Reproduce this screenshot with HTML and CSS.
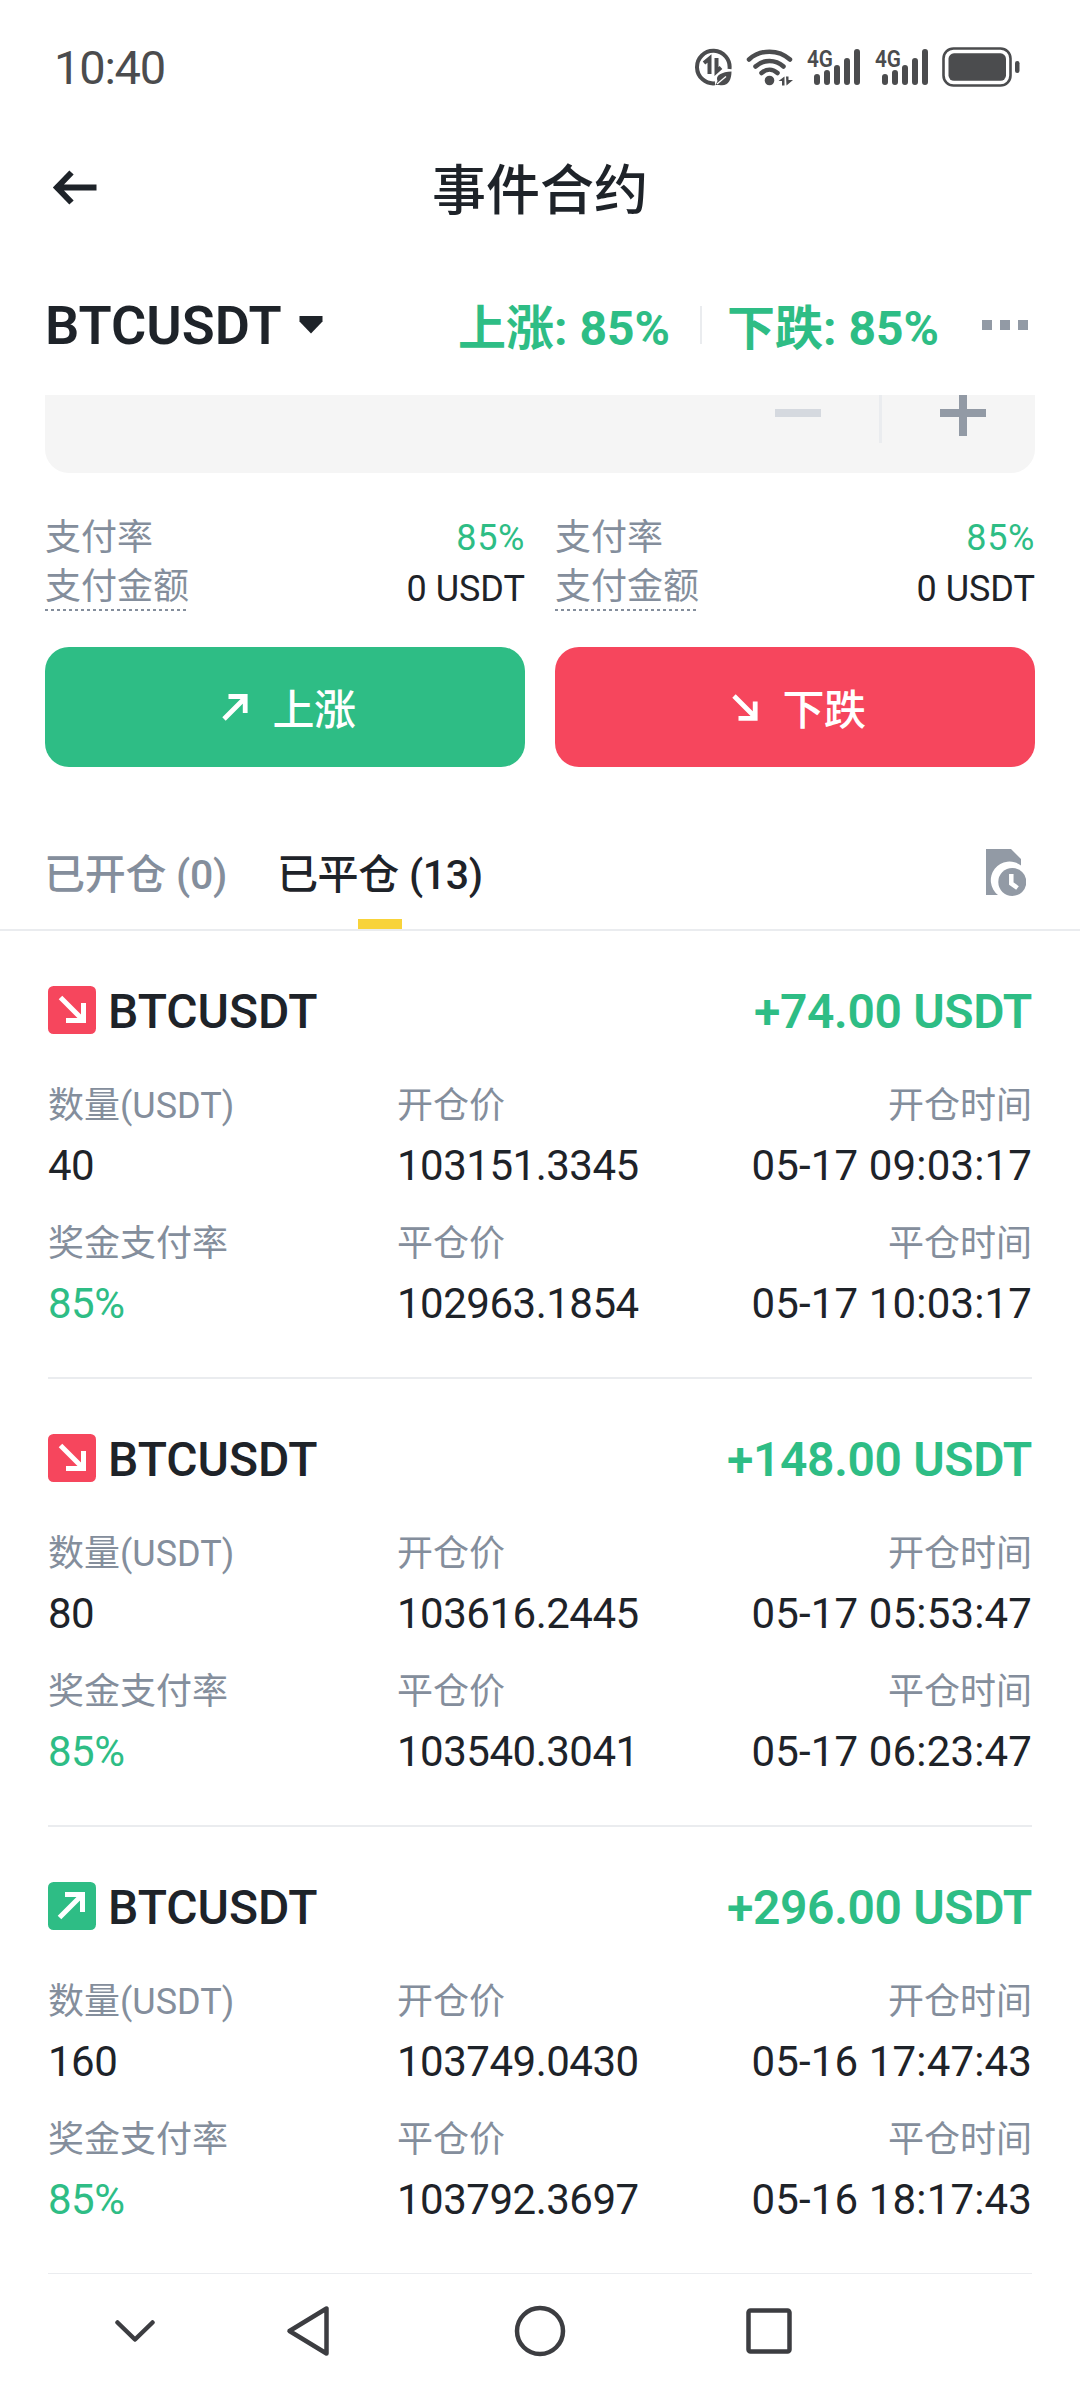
FILE: index.html
```html
<!DOCTYPE html>
<html lang="zh-CN">
<head>
<meta charset="utf-8">
<title>事件合约</title>
<link rel="stylesheet" href="styles.css">
</head>
<body>
<svg class="defs" width="0" height="0">
  <symbol id="badge-down" viewBox="0 0 48 48">
    <rect width="48" height="48" rx="5.500" fill="#f6465d"/>
    <path d="M12.500 11.500 33 32M18 34.500H35.500V17" fill="none" stroke="#fff" stroke-width="5"/>
  </symbol>
  <symbol id="badge-up" viewBox="0 0 48 48">
    <rect width="48" height="48" rx="5.500" fill="#2ebd85"/>
    <path d="M11.500 35.500 32 15M17 12.500H34.500V30" fill="none" stroke="#fff" stroke-width="5"/>
  </symbol>
</svg>
<div class="screen">
  <header class="status">
    <span class="clock">10:40</span>
    <svg class="s1" width="37" height="40" viewBox="0 0 37 40">
      <path d="M34.500 22A16.300 16.300 0 1 0 20 36.300" fill="none" stroke="#4b4c4e" stroke-width="4"/>
      <path d="M9 16 14.500 11.500V27M21.500 11V24.500L26 20.500" fill="none" stroke="#4b4c4e" stroke-width="4"/>
      <path d="M36.500 24.500C27 25 20 28 22.500 34L20.500 38H24C33 40 36.500 33 36.500 24.500Z" fill="#4b4c4e"/>
      <path d="M22 37 31 29.500" stroke="#fff" stroke-width="1.300"/>
    </svg>
    <svg class="s2" width="47" height="40" viewBox="0 0 47 40">
      <g fill="none" stroke="#4b4c4e" stroke-width="4.500" stroke-linecap="round"><path d="M3 12.500C14.500 2 32.500 2 44 12.500M9.500 19.500C17.500 12 29.500 12 37.500 19.500M15.500 26C20.500 21.500 26.500 21.500 31.500 26"/></g>
      <circle cx="23.500" cy="33.500" r="4.800" fill="#4b4c4e"/>
      <path d="M32.500 34 38.500 29.500V38.500H36V34ZM40 29.500H42.500V33H47L40.500 38.500Z" fill="#4b4c4e"/>
    </svg>
    <svg class="s3 cell-signal" width="55" height="40" viewBox="0 0 55 40">
      <text x="1" y="20" class="net" textLength="26" lengthAdjust="spacingAndGlyphs">4G</text>
      <path d="M11 30v5M21 26v9M31 21v14M41 14v21M51 5v30" stroke="#4b4c4e" stroke-width="6" stroke-linecap="round"/>
    </svg>
    <svg class="s3 cell-signal" width="55" height="40" viewBox="0 0 55 40">
      <text x="1" y="20" class="net" textLength="26" lengthAdjust="spacingAndGlyphs">4G</text>
      <path d="M11 30v5M21 26v9M31 21v14M41 14v21M51 5v30" stroke="#4b4c4e" stroke-width="6" stroke-linecap="round"/>
    </svg>
    <svg class="s3" width="78" height="40" viewBox="0 0 78 40">
      <rect x="1.500" y="1.500" width="67" height="37" rx="10" fill="none" stroke="#4b4c4e" stroke-width="2.600"/>
      <rect x="6.500" y="6.300" width="57.500" height="27.500" rx="5.500" fill="#4b4c4e"/>
      <rect x="73" y="14" width="4.500" height="12" rx="2.200" fill="#4b4c4e"/>
    </svg>
  </header>

  <div class="titlebar">
    <svg class="back" width="47" height="40" viewBox="0 0 47 40"><path d="M20.500 4.500 6 19.500 20.500 34.500M6 19.500H45.500" fill="none" stroke="#1e2329" stroke-width="6"/></svg>
    <h1>事件合约</h1>
  </div>

  <div class="pairbar">
    <span class="pair">BTCUSDT</span>
    <svg class="caret" width="24" height="18" viewBox="0 0 24 18"><path d="M0.500 0H23.500V5.500L12 17.500.500 5.500Z" fill="#1e2329"/></svg>
    <span class="rate">上涨: 85%</span>
    <i class="vline"></i>
    <span class="rate">下跌: 85%</span>
    <svg class="dots" width="46" height="10" viewBox="0 0 46 10"><path d="M0 0H10V10H0ZM18 0H28V10H18ZM36 0H46V10H36Z" fill="#929aa5"/></svg>
  </div>

  <div class="stepper">
    <svg width="46" height="8" viewBox="0 0 46 8" class="minus"><path d="M0 0H46V8H0Z" fill="#d5d9df"/></svg>
    <i class="sep"></i>
    <svg width="46" height="41" viewBox="0 0 46 41" class="plus"><path d="M19 0H27V14H46V22H27V41H19V22H0V14H19Z" fill="#929aa5"/></svg>
  </div>

  <div class="sides">
    <section class="side">
      <div class="line"><span class="label">支付率</span><span class="green pct">85%</span></div>
      <div class="line"><span class="label dotted">支付金额</span><span>0 USDT</span></div>
      <button class="btn up">
        <svg width="26" height="27" viewBox="0 0 26 27"><path d="M2 25 22 5M6.500 2.500H23.200V19" fill="none" stroke="#fff" stroke-width="4.800"/></svg>
        <span>上涨</span>
      </button>
    </section>
    <section class="side">
      <div class="line"><span class="label">支付率</span><span class="green pct">85%</span></div>
      <div class="line"><span class="label dotted">支付金额</span><span>0 USDT</span></div>
      <button class="btn down">
        <svg width="26" height="27" viewBox="0 0 26 27"><path d="M2 2 22 22M6.500 24.400H23.200V7.500" fill="none" stroke="#fff" stroke-width="4.800"/></svg>
        <span>下跌</span>
      </button>
    </section>
  </div>

  <nav class="tabs">
    <span class="tab">已开仓 (0)</span>
    <span class="tab active">已平仓 (13)</span>
    <svg class="history" width="40" height="48" viewBox="0 0 40 48">
      <path d="M0 0H25L35 10V16.500A18.500 18.500 0 0 0 12 46H0Z" fill="#929aa5"/>
      <circle cx="26.300" cy="33" r="14" fill="#929aa5"/>
      <path d="M25.300 25V34.500L31.500 39" fill="none" stroke="#fff" stroke-width="4.500"/>
    </svg>
  </nav>

  <main class="orders">
    <article class="order">
      <div class="head"><svg width="48" height="48"><use href="#badge-down"/></svg><b class="sym">BTCUSDT</b><b class="pnl">+74.00 USDT</b></div>
      <div class="grid">
        <div class="cell"><span class="label">数量(USDT)</span><span class="val">40</span></div>
        <div class="cell"><span class="label">开仓价</span><span class="val">103151.3345</span></div>
        <div class="cell end"><span class="label">开仓时间</span><span class="val time">05-17 09:03:17</span></div>
        <div class="cell"><span class="label">奖金支付率</span><span class="val green">85%</span></div>
        <div class="cell"><span class="label">平仓价</span><span class="val">102963.1854</span></div>
        <div class="cell end"><span class="label">平仓时间</span><span class="val time">05-17 10:03:17</span></div>
      </div>
    </article>
    <article class="order">
      <div class="head"><svg width="48" height="48"><use href="#badge-down"/></svg><b class="sym">BTCUSDT</b><b class="pnl">+148.00 USDT</b></div>
      <div class="grid">
        <div class="cell"><span class="label">数量(USDT)</span><span class="val">80</span></div>
        <div class="cell"><span class="label">开仓价</span><span class="val">103616.2445</span></div>
        <div class="cell end"><span class="label">开仓时间</span><span class="val time">05-17 05:53:47</span></div>
        <div class="cell"><span class="label">奖金支付率</span><span class="val green">85%</span></div>
        <div class="cell"><span class="label">平仓价</span><span class="val">103540.3041</span></div>
        <div class="cell end"><span class="label">平仓时间</span><span class="val time">05-17 06:23:47</span></div>
      </div>
    </article>
    <article class="order">
      <div class="head"><svg width="48" height="48"><use href="#badge-up"/></svg><b class="sym">BTCUSDT</b><b class="pnl">+296.00 USDT</b></div>
      <div class="grid">
        <div class="cell"><span class="label">数量(USDT)</span><span class="val">160</span></div>
        <div class="cell"><span class="label">开仓价</span><span class="val">103749.0430</span></div>
        <div class="cell end"><span class="label">开仓时间</span><span class="val time">05-16 17:47:43</span></div>
        <div class="cell"><span class="label">奖金支付率</span><span class="val green">85%</span></div>
        <div class="cell"><span class="label">平仓价</span><span class="val">103792.3697</span></div>
        <div class="cell end"><span class="label">平仓时间</span><span class="val time">05-16 18:17:43</span></div>
      </div>
    </article>
  </main>

  <footer class="sysnav">
    <svg width="40" height="52" viewBox="0 0 40 52"><path d="M2.500 17.500 20 34.500 37.500 17.500" fill="none" stroke="#3c3d41" stroke-width="4.500" stroke-linecap="round" stroke-linejoin="round"/></svg>
    <svg width="44" height="52" viewBox="0 0 44 52"><path d="M40.500 3.500V48.500L3.500 26Z" fill="none" stroke="#3c3d41" stroke-width="4.500" stroke-linejoin="round"/></svg>
    <svg width="52" height="52" viewBox="0 0 52 52"><circle cx="26" cy="26" r="23" fill="none" stroke="#3c3d41" stroke-width="4.500"/></svg>
    <svg width="46" height="52" viewBox="0 0 46 52"><rect x="2.500" y="5.500" width="41" height="41" rx="2" fill="none" stroke="#3c3d41" stroke-width="4.500"/></svg>
  </footer>
</div>
</body>
</html>
```
FILE: styles.css
```css
* { box-sizing: border-box; }
body {
  margin: 0;
  background: #fff;
  color: #1e2329;
  font-family: Roboto, "Noto Sans CJK SC", sans-serif;
}
svg { display: block; flex: none; }
.defs { position: absolute; }
.screen {
  width: 1080px;
  height: 2388px;
  overflow: hidden;
  display: flex;
  flex-direction: column;
}

.status {
  flex: none;
  height: 134px;
  padding: 0 60px 0 54px;
  display: flex;
  align-items: center;
}
.clock {
  margin-right: auto;
  padding-top: 2px;
  font-size: 47px;
  line-height: 60px;
  letter-spacing: -1.2px;
  color: #4b4c4e;
}
.s2 { margin-left: 14px; }
.s3 { margin-left: 13px; }
.cell-signal { overflow: visible; }
.net { font: 600 24px Roboto, sans-serif; fill: #4b4c4e; }

.titlebar {
  flex: none;
  height: 114px;
  padding: 0 51px;
  display: grid;
  grid-template-columns: 47px 1fr 47px;
  align-items: center;
}
.back { margin-bottom: 7px; }
h1 {
  margin: 0;
  padding-top: 2px;
  font-size: 54px;
  line-height: 70px;
  font-weight: 500;
  text-align: center;
}

.pairbar {
  flex: none;
  height: 147px;
  padding: 7px 52px 0 45px;
  display: flex;
  align-items: center;
}
.pair { padding-top: 2px; font-size: 54px; font-weight: 600; line-height: 70px; }
.caret { margin-left: 17px; margin-right: auto; }
.rate { font-size: 48px; font-weight: 700; line-height: 60px; color: #2ebd85; padding-top: 7px; }
.vline { width: 2px; height: 38px; margin: 0 25px 0 30px; background: #eaecef; }
.dots { margin-left: 43px; }

.stepper {
  flex: none;
  height: 78px;
  margin: 0 45px;
  padding-right: 49px;
  border-radius: 0 0 24px 24px;
  background: #f5f5f5;
  display: flex;
  justify-content: flex-end;
  align-items: flex-start;
}
.minus { margin-top: 14px; }
.sep { width: 3px; height: 48px; margin: 0 58px; background: #eaecef; }

.sides {
  flex: none;
  margin: 40px 45px 0;
  display: grid;
  grid-template-columns: 1fr 1fr;
  gap: 30px;
}
.line {
  display: flex;
  justify-content: space-between;
  align-items: flex-start;
  font-size: 36px;
  line-height: 51px;
}
.label { font-size: 36px; color: #848e9c; white-space: nowrap; }
.dotted {
  height: 47px;
  padding-top: 1px;
  line-height: 45px;
  background: repeating-linear-gradient(90deg, #848e9c 0 3px, transparent 3px 6px) 0 100% / 100% 2px no-repeat;
}
.green { color: #2ebd85; }
.pct { letter-spacing: 0.6px; }
.btn {
  width: 100%;
  height: 120px;
  margin-top: 32px;
  padding: 0 0 0 8px;
  border: 0;
  border-radius: 24px;
  display: flex;
  align-items: center;
  justify-content: center;
  gap: 24px;
  color: #fff;
  font: 500 42px/60px Roboto, "Noto Sans CJK SC", sans-serif;
}
.btn span { padding-top: 7px; letter-spacing: -0.5px; }
.up { background: #2ebd85; }
.down { background: #f6465d; }

.tabs {
  flex: none;
  height: 164px;
  padding: 0 54px 0 44px;
  border-bottom: 2px solid #eaecef;
  display: flex;
  align-items: flex-end;
  gap: 50px;
}
.tab {
  position: relative;
  height: 78px;
  font-size: 41px;
  line-height: 49px;
  font-weight: 500;
  letter-spacing: -0.3px;
  color: #848e9c;
}
.active { color: #1e2329; }
.active::after {
  content: "";
  position: absolute;
  left: 50%;
  bottom: 0;
  width: 44px;
  height: 10px;
  margin-left: -22px;
  background: #f8d33a;
}
.history { margin-left: auto; margin-bottom: 32px; }

.orders { flex: none; height: 1343px; overflow: hidden; padding: 0 48px; }
.order {
  height: 448px;
  padding-top: 55px;
  border-bottom: 2px solid #eaecef;
}
.head { display: flex; align-items: center; height: 48px; font-size: 48px; line-height: 48px; }
.sym { margin-left: 12px; padding-top: 3px; font-weight: 500; }
.pnl { margin-left: auto; padding-top: 3px; font-weight: 600; letter-spacing: -0.35px; color: #2ebd85; }
.grid {
  margin-top: 51px;
  display: grid;
  grid-template-columns: 349px 1fr auto;
  row-gap: 32px;
}
.cell { display: flex; flex-direction: column; gap: 14px; }
.cell .label { line-height: 42px; }
.val { font-size: 42px; line-height: 50px; letter-spacing: -0.5px; white-space: nowrap; }
.time { letter-spacing: 0.15px; }
.end { align-items: flex-end; }

.sysnav {
  flex: none;
  height: 114px;
  padding: 0 0 0 115px;
  display: flex;
  align-items: center;
}
.sysnav svg:nth-child(2) { margin-left: 131px; }
.sysnav svg:nth-child(3) { margin-left: 184px; }
.sysnav svg:nth-child(4) { margin-left: 180px; }
```
